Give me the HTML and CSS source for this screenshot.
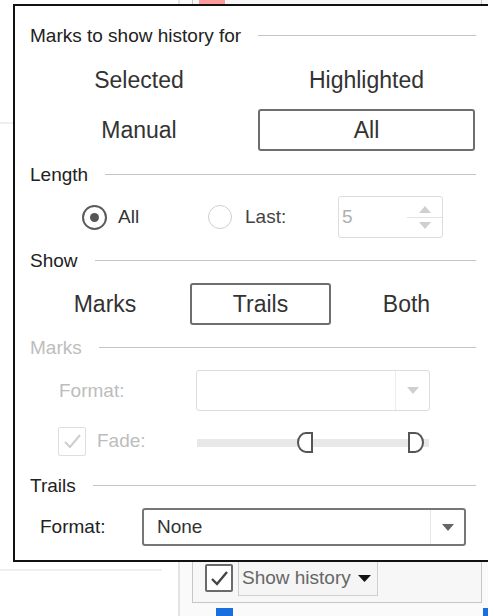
FILE: index.html
```html
<!DOCTYPE html>
<html>
<head>
<meta charset="utf-8">
<link rel="stylesheet" href="styles.css">
</head>
<body>
<div class="page">
  <div class="left-pane">
    <div class="hr hr-a"></div>
    <div class="hr hr-b"></div>
  </div>
  <div class="right-pane">
    <div class="card">
      <div class="legend-item"><span class="swatch"></span><span class="legend-label">Observed</span></div>
      <div class="card-foot">
        <span class="cb cb-on"><svg width="19" height="17" viewBox="0 0 19 17"><path d="M2 9 L7 14 L17 2" fill="none" stroke="#444" stroke-width="2.4"/></svg></span>
        <span class="history-btn">Show history <svg width="13" height="7" viewBox="0 0 13 7"><polygon points="0,0 13,0 6.5,7" fill="#111"/></svg></span>
      </div>
    </div>
  </div>

  <span class="handle handle-r"></span>
  <span class="handle handle-b1"></span>
  <span class="handle handle-b2"></span>

  <div class="dialog">
    <div class="heading"><span>Marks to show history for</span><span class="rule"></span></div>
    <div class="opts">
      <div class="opt">Selected</div>
      <div class="opt">Highlighted</div>
      <div class="opt">Manual</div>
      <div class="opt opt-sel">All</div>
    </div>

    <div class="heading h-len"><span>Length</span><span class="rule"></span></div>
    <div class="radio-row">
      <div class="radio-item ri-1"><span class="radio radio-on"><span class="dot"></span></span><span class="radio-label">All</span></div>
      <div class="radio-item ri-2"><span class="radio radio-off"></span><span class="radio-label">Last:</span></div>
      <div class="spin">
        <span class="spin-val">5</span>
        <span class="spin-arrows">
          <svg width="12" height="7" viewBox="0 0 12 7"><polygon points="0,7 12,7 6,0" fill="#cfcfcf"/></svg>
          <span class="spin-div"></span>
          <svg width="12" height="7" viewBox="0 0 12 7"><polygon points="0,0 12,0 6,7" fill="#cfcfcf"/></svg>
        </span>
      </div>
    </div>

    <div class="heading h-show"><span>Show</span><span class="rule"></span></div>
    <div class="show-row">
      <div class="opt opt-first">Marks</div>
      <div class="opt opt-sel">Trails</div>
      <div class="opt">Both</div>
    </div>

    <div class="heading heading-dis h-marks"><span>Marks</span><span class="rule"></span></div>
    <div class="form-row fr-marks">
      <span class="lbl lbl-dis lbl-marks">Format:</span>
      <div class="select select-dis">
        <span class="select-val"></span>
        <span class="select-arrow"><svg width="12" height="7" viewBox="0 0 12 7"><polygon points="0,0 12,0 6,7" fill="#cfcfcf"/></svg></span>
      </div>
    </div>
    <div class="fade-row">
      <div class="fade-lbl">
        <span class="cb cb-dis"><svg width="19" height="17" viewBox="0 0 19 17"><path d="M2 9 L7 14 L17 2" fill="none" stroke="#cdcdcd" stroke-width="2"/></svg></span>
        <span class="lbl lbl-dis">Fade:</span>
      </div>
      <div class="track">
        <svg class="thumb thumb-l" width="17" height="21" viewBox="0 0 17 21"><path d="M15 1 H9 A8 9.5 0 0 0 9 20 H15 Z" fill="#fff" stroke="#555" stroke-width="2"/></svg>
        <svg class="thumb thumb-r" width="17" height="21" viewBox="0 0 17 21"><path d="M2 1 H8 A8 9.5 0 0 1 8 20 H2 Z" fill="#fff" stroke="#555" stroke-width="2"/></svg>
      </div>
    </div>

    <div class="heading h-trails"><span>Trails</span><span class="rule"></span></div>
    <div class="form-row fr-trails">
      <span class="lbl lbl-trails">Format:</span>
      <div class="select select-on">
        <span class="select-val">None</span>
        <span class="select-arrow"><svg width="12" height="7" viewBox="0 0 12 7"><polygon points="0,0 12,0 6,7" fill="#666"/></svg></span>
      </div>
    </div>
  </div>
</div>
</body>
</html>
```

FILE: styles.css
```css
* { box-sizing: border-box; }
html, body { margin: 0; padding: 0; }
body {
  width: 488px;
  height: 616px;
  overflow: hidden;
  background: #fff;
  font-family: "Liberation Sans", Arial, sans-serif;
}
.page {
  position: relative;
  display: flex;
  width: 488px;
  height: 616px;
  overflow: hidden;
}
.left-pane {
  width: 178px;
  flex: none;
  display: flex;
  flex-direction: column;
}
.hr { height: 2px; background: #efefef; width: 162px; }
.hr-a { margin-top: 122px; }
.hr-b { margin-top: 445px; }

.right-pane {
  flex: 1;
  border-left: 2px solid #e4e4e4;
  background: #fafafa;
  padding: 0 6px 0 12px;
}
.card {
  height: 603px;
  border: 1px solid #c6c6c6;
  border-top: none;
  background: #f7f7f7;
  display: flex;
  flex-direction: column;
  justify-content: space-between;
}
.legend-item {
  display: flex;
  align-items: flex-start;
  gap: 14px;
  padding-left: 6px;
  margin-top: -14px;
}
.swatch { width: 26px; height: 18px; background: #fb9c9b; }
.legend-label { font-size: 19px; color: #222; line-height: 22px; margin-top: -3px; }
.card-foot {
  display: flex;
  align-items: flex-end;
  gap: 5px;
  padding: 0 0 6px 12px;
}
.cb {
  display: flex;
  align-items: center;
  justify-content: center;
  width: 28px;
  height: 28px;
  border-radius: 2px;
  background: #fff;
}
.cb-on { border: 2px solid #6a6a6a; margin-bottom: 4px; }
.history-btn {
  display: flex;
  align-items: center;
  gap: 7px;
  height: 36px;
  padding: 0 6px 0 3px;
  border: 1px solid #cfcfcf;
  background: #f5f5f5;
  color: #666;
  font-size: 19px;
}

.handle { position: absolute; width: 17px; height: 17px; background: #1a6fe0; }
.handle-r { left: 483px; top: 281px; }
.handle-b1 { left: 216px; top: 608px; }
.handle-b2 { left: 483px; top: 608px; }

.dialog {
  position: absolute;
  left: 13px;
  top: 4px;
  width: 520px;
  border: 2px solid #111;
  background: #fff;
  padding: 19px 57px 14px 15px;
  color: #222;
}
.dialog > * { width: 446px; }

.heading {
  display: flex;
  align-items: center;
  gap: 17px;
  font-size: 19px;
  line-height: 22px;
  color: #222;
}
.rule { flex: 1; height: 1px; background: #c4c4c4; margin-top: -1px; }
.heading-dis { color: #bdbdbd; }
.h-len { margin-top: 13px; }
.h-show { margin-top: 12px; }
.h-marks { margin-top: 12px; }
.h-trails { margin-top: 19px; }

.opts {
  margin-top: 12px;
  display: grid;
  grid-template-columns: 218px 217px;
  column-gap: 10px;
  row-gap: 8px;
}
.opt {
  height: 42px;
  display: flex;
  align-items: center;
  justify-content: center;
  font-size: 23px;
  line-height: 24px;
  color: #333;
  border: 2px solid transparent;
  border-radius: 3px;
}
.opt-sel { border-color: #6e6e6e; }

.radio-row {
  margin-top: 10px;
  height: 42px;
  display: flex;
  align-items: center;
  padding-left: 52px;
  font-size: 19px;
  color: #333;
}
.radio-item { display: flex; align-items: center; }
.ri-1 { width: 126px; }
.ri-2 { width: 130px; }
.radio {
  width: 25px;
  height: 25px;
  border-radius: 50%;
  display: flex;
  align-items: center;
  justify-content: center;
  background: #fff;
}
.radio-on { border: 2px solid #5a5a5a; }
.radio-off { border: 1.5px solid #cfcfcf; width: 24px; height: 24px; }
.dot { width: 9px; height: 9px; border-radius: 50%; background: #555; }
.radio-label { margin-left: 11px; line-height: 22px; }
.ri-2 .radio-label { margin-left: 13px; color: #444; }
.spin {
  width: 105px;
  height: 42px;
  border: 1.5px solid #dcdcdc;
  border-radius: 3px;
  display: flex;
  align-items: center;
}
.spin-val { flex: 1; color: #b0b0b0; padding-left: 3px; font-size: 19px; }
.spin-arrows {
  width: 35px;
  align-self: stretch;
  display: flex;
  flex-direction: column;
  align-items: center;
  justify-content: center;
  gap: 3px;
}
.spin-div { width: 35px; height: 1px; background: #e2e2e2; margin: 1px 0; }

.show-row {
  margin-top: 11px;
  display: grid;
  grid-template-columns: 160px 141px 151px;
}
.opt-first { padding-right: 10px; }

.form-row { display: flex; align-items: center; font-size: 19px; }
.fr-marks { margin-top: 11px; height: 41px; padding-left: 29px; }
.lbl { line-height: 22px; }
.lbl-dis { color: #bdbdbd; }
.lbl-marks { width: 137px; }
.select {
  display: flex;
  align-items: stretch;
  border-radius: 3px;
  height: 100%;
}
.select-dis { width: 234px; border: 1.5px solid #dcdcdc; }
.select-val { flex: 1; display: flex; align-items: center; padding-left: 13px; color: #333; }
.select-arrow {
  width: 34px;
  display: flex;
  align-items: center;
  justify-content: center;
  border-left: 1px solid #ececec;
}
.fade-row {
  margin-top: 15px;
  height: 30px;
  display: flex;
  align-items: center;
  padding-left: 28px;
  font-size: 19px;
}
.fade-lbl { width: 139px; display: flex; align-items: center; }
.cb-dis { border: 1.5px solid #dedede; height: 29px; }
.fade-lbl .lbl { margin-left: 11px; }
.track {
  position: relative;
  width: 232px;
  height: 8px;
  margin-top: 3px;
  background: #e8e8e8;
}
.thumb { position: absolute; top: -7px; }
.thumb-l { left: 100px; }
.thumb-r { left: 210px; }

.fr-trails { margin-top: 11px; height: 38px; padding-left: 10px; color: #222; }
.lbl-trails { width: 102px; }
.select-on { width: 324px; border: 2px solid #767676; }
.select-on .select-arrow { border-left-color: #e6e6e6; }
.select-on .select-val { color: #333; }
```
